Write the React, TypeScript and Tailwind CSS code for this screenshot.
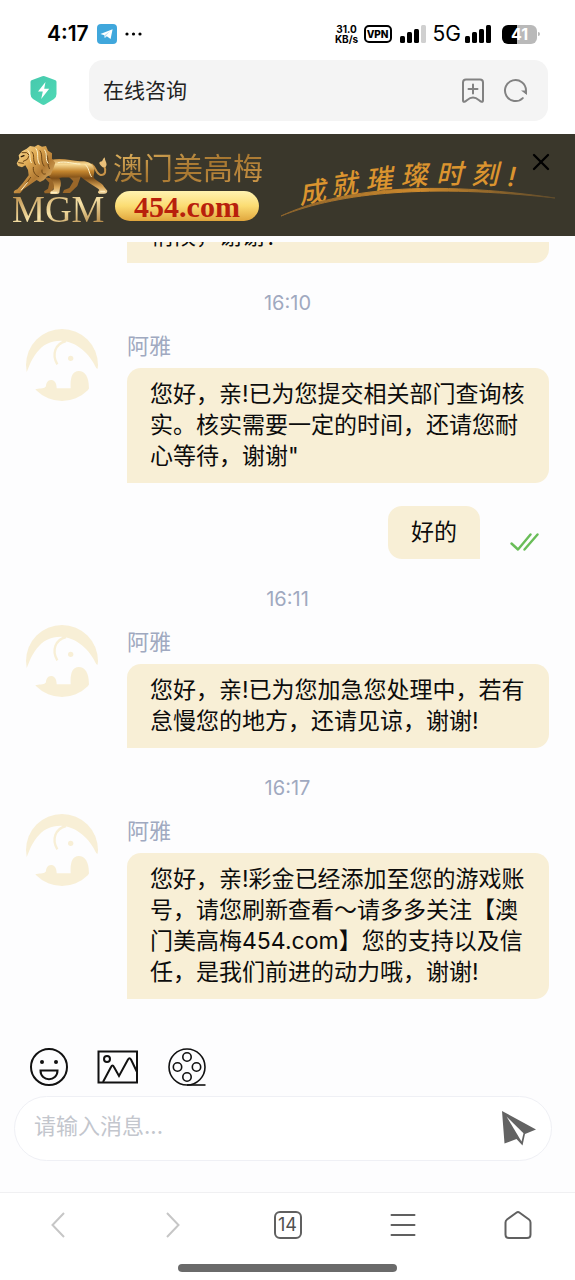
import { useState } from "react";
import { X } from "lucide-react";

interface Message {
  from: "agent" | "me";
  time?: string;
  text: string;
}

const messages: Message[] = [
  {
    from: "agent",
    time: "16:10",
    text: "您好，亲!已为您提交相关部门查询核实。核实需要一定的时间，还请您耐心等待，谢谢\"",
  },
  { from: "me", text: "好的" },
  {
    from: "agent",
    time: "16:11",
    text: "您好，亲!已为您加急您处理中，若有怠慢您的地方，还请见谅，谢谢!",
  },
  {
    from: "agent",
    time: "16:17",
    text: "您好，亲!彩金已经添加至您的游戏账号，请您刷新查看～请多多关注【澳门美高梅454.com】您的支持以及信任，是我们前进的动力哦，谢谢!",
  },
];

function SignalBars({ weak }: { weak?: boolean }) {
  return (
    <svg viewBox="0 0 27 18" className="h-[18px] w-[27px]">
      <rect x="0" y="11" width="5" height="7" rx="1.5" />
      <rect x="7" y="7" width="5" height="11" rx="1.5" />
      <rect x="14" y="4" width="5" height="14" rx="1.5" />
      <rect x="21" y="0" width="5" height="18" rx="1.5" fill={weak ? "#d0d0d0" : "#000"} />
    </svg>
  );
}

function StatusBar() {
  return (
    <div className="flex h-[60px] items-center pt-2 pr-[35px] pl-[47px] text-black">
      <span className="text-[21px] font-semibold">4:17</span>
      <svg viewBox="0 0 20 20" className="ml-2 size-5">
        <rect width="20" height="20" rx="4" fill="#40a7dc" />
        <path d="M3.4 10 15.6 5.2 13.6 15 9.8 12.3 7.8 14 7.4 11.2Z" fill="#fff" />
        <path d="M7.4 11.2 13 7.2 8.8 11.8 7.8 14Z" fill="#b5dcf2" />
      </svg>
      <svg viewBox="0 0 18 4" className="ml-2 h-1 w-[18px]">
        <circle cx="2" cy="2" r="1.6" />
        <circle cx="8.500" cy="2" r="1.6" />
        <circle cx="15" cy="2" r="1.6" />
      </svg>

      <div className="ml-auto flex items-center">
        <div className="flex w-[26px] flex-col text-center text-[10px] leading-[10px] font-bold">
          <span>31.0</span>
          <span>KB/s</span>
        </div>
        <span className="ml-1 flex h-[18px] w-7 items-center justify-center rounded-[5px] border-2 border-black text-[10px] font-extrabold">
          VPN
        </span>
        <span className="ml-2">
          <SignalBars weak />
        </span>
        <span className="ml-1.5 text-[21px]">5G</span>
        <span className="ml-1">
          <SignalBars />
        </span>
        <span className="ml-2.5 flex h-[19px] w-[35px] items-center justify-center rounded-[6px] bg-linear-to-r from-black from-42% to-[#b9b9b9] to-42% text-[16px] font-bold text-white">
          41
        </span>
        <span className="ml-px h-1 w-0.5 rounded-r bg-[#b9b9b9]" />
      </div>
    </div>
  );
}

function AddressBar() {
  return (
    <div className="flex items-center pr-[27px] pb-[13px] pl-[30px]">
      <svg viewBox="0 0 28 31" className="h-[31px] w-7">
        <defs>
          <linearGradient id="shield" x1="0" y1="0" x2="1" y2="1">
            <stop offset="0" stopColor="#46c9ad" />
            <stop offset="1" stopColor="#4fd9b5" />
          </linearGradient>
        </defs>
        <path
          d="M12.300 1.300Q13.500.7 14.700 1.300L25.500 5.300Q26.500 5.800 26.500 7V19Q26.500 22 24 24L15 29.600Q13.500 30.500 12 29.600L3 24Q.5 22 .5 19V7Q.5 5.800 1.500 5.300Z"
          fill="url(#shield)"
        />
        <path d="M15.500 7 8 16.500H12.800L11.200 24 19.200 13.800H14.200Z" fill="#fff" />
      </svg>
      <div className="ml-[31px] flex h-[61px] flex-1 items-center rounded-[14px] bg-[#f4f4f4] pr-5 pl-[14px]">
        <span className="flex-1 text-[21px] text-[#222]">在线咨询</span>
        <button aria-label="收藏">
          <svg
            viewBox="0 0 24 26"
            className="h-[26px] w-6"
            fill="none"
            stroke="#828282"
            strokeWidth="2"
            strokeLinecap="round"
            strokeLinejoin="round"
          >
            <path d="M5 1.500H19Q22 1.500 22 4.500V22.500Q22 24.500 20 23.500C18 22.500 16 19.500 12 19.500S6 22.500 4 23.500Q2 24.500 2 22.500V4.500Q2 1.500 5 1.500Z" />
            <path d="M12 6.500V15.500M7.500 11H16.500" />
          </svg>
        </button>
        <button aria-label="刷新" className="ml-[18px]">
          <svg viewBox="0 0 25 25" className="size-[25px]" fill="none" stroke="#828282" strokeWidth="2">
            <path d="M19.800 20.100A10.500 10.500 0 1 1 23 12.500V15" strokeLinecap="round" />
            <path d="M18 12.500H24V17Z" fill="#828282" stroke="none" />
          </svg>
        </button>
      </div>
    </div>
  );
}

function Lion() {
  return (
    <svg viewBox="0 0 288 150" className="h-[50px] w-24">
      <defs>
        <linearGradient id="mane" x1="0" y1="0" x2="1" y2="1">
          <stop offset="0" stopColor="#fbe3a0" />
          <stop offset=".35" stopColor="#e0ab55" />
          <stop offset=".6" stopColor="#b27a33" />
          <stop offset="1" stopColor="#f0cd85" />
        </linearGradient>
        <linearGradient id="flank" x1="0" y1="0" x2="0" y2="1">
          <stop offset="0" stopColor="#c78d3e" />
          <stop offset=".15" stopColor="#f8dc98" />
          <stop offset=".35" stopColor="#c4862f" />
          <stop offset=".55" stopColor="#7d4d17" />
          <stop offset=".8" stopColor="#d9a557" />
          <stop offset="1" stopColor="#f8e0aa" />
        </linearGradient>
      </defs>
      {/* far legs */}
      <path
        d="M166 94 184 112 172 132 156 138 152 147H174L196 126 206 98ZM96 100 112 116 108 134 96 142 98 148H114L126 132 128 104Z"
        fill="#9a6729"
      />
      {/* tail */}
      <path
        d="M238 60C252 70 252 90 266 93C280 94 284 80 276 66"
        fill="none"
        stroke="#c99448"
        strokeWidth="6"
      />
      <path d="M272 70C260 60 258 54 270 52Q274 42 279 40C276 50 290 58 280 70Z" fill="#eac07a" />
      {/* body, hind leg and planted front leg */}
      <path
        d="M116 48C146 40 180 50 204 52C226 50 242 58 246 72C250 86 242 96 246 102C254 112 272 118 276 128L286 140Q286 149 276 149H262Q254 146 262 138C258 130 232 120 206 98C184 104 160 98 142 102C148 112 148 122 144 132L142 146Q140 150 132 150H116Q110 144 124 138C132 122 118 106 108 92Z"
        fill="url(#flank)"
      />
      {/* mane, head and stretched front leg */}
      <path
        d="M14 58 22 44 20 34 30 22 44 14 54 6 68 8 78 2 90 8 102 6 108 20 120 28 120 44 130 56 124 74 116 92 104 98 96 108 84 114 74 108 62 116 48 126 34 136 24 148H6Q2 140 16 136L32 118 50 94 48 78 40 64 30 70 18 66Z"
        fill="url(#mane)"
      />
      <g fill="none" strokeLinecap="round">
        <path
          d="M30 26 44 26 52 34 46 46 34 52M20 56 34 58M60 24C70 34 60 46 70 62M84 20C94 34 84 50 96 66M104 32C112 44 104 60 112 74M64 70C62 84 70 94 80 98M90 78C88 88 94 92 100 90M56 100 42 120"
          stroke="#6b4414"
          strokeWidth="3"
        />
        <path
          d="M48 20C58 30 50 42 58 56M72 14C82 28 72 42 82 60M98 18C108 32 98 46 108 58M138 56C160 50 184 60 204 60M220 62C232 72 230 86 238 98M28 138 46 116M266 142H278M118 145H134"
          stroke="#fff3c9"
          strokeWidth="3"
        />
        <path d="m28 38 8-3" stroke="#2a1a08" strokeWidth="4" />
      </g>
    </svg>
  );
}

function Slogan() {
  return (
    <svg viewBox="0 0 280 70" className="h-[70px] w-[280px]">
      <defs>
        <linearGradient id="swoosh">
          <stop offset="0" stopColor="#8a622b" />
          <stop offset=".5" stopColor="#cf8a2c" />
          <stop offset="1" stopColor="#5d4a2b" />
        </linearGradient>
      </defs>
      <text
        x="19 51 85 120 155 190 226"
        y="54 46 40 36 34 34 36"
        rotate="-8 -8 -5 -3 -1 0 4"
        fill="#db942f"
        fontSize="27"
        fontStyle="italic"
        fontWeight="500"
      >
        成就璀璨时刻!
      </text>
      <path
        d="M0 66C60 38 150 30 274 48C150 34 60 42 0 66Z"
        fill="url(#swoosh)"
        stroke="url(#swoosh)"
        strokeWidth="1"
      />
    </svg>
  );
}

function Banner({ onClose }: { onClose: () => void }) {
  return (
    <div className="relative flex h-[102px] items-center bg-[#3a372b] pl-3">
      <div className="flex w-24 flex-col">
        <Lion />
        <span className="bg-linear-to-br from-[#b98b45] via-[#f7e3a8] to-[#a87a35] bg-clip-text font-['Liberation_Serif'] text-[37px] leading-[32px] text-transparent">
          MGM
        </span>
      </div>
      <div className="ml-[5px] flex flex-col">
        <span className="bg-linear-to-br from-[#e8bc66] via-[#a5752f] to-[#d09a4a] bg-clip-text text-[30px] leading-[38px] text-transparent">
          澳门美高梅
        </span>
        <span className="mt-1 ml-0.5 flex h-[30px] w-36 items-center justify-center rounded-full bg-linear-to-b from-[#fff3b0] via-[#fbdc72] to-[#e0a63c] font-['Liberation_Serif'] text-[30px] font-bold text-[#b8200c]">
          454.com
        </span>
      </div>
      <div className="ml-[18px]">
        <Slogan />
      </div>
      <button aria-label="关闭" onClick={onClose} className="absolute top-3.5 right-5 text-black">
        <X className="size-7" strokeWidth={2} />
      </button>
    </div>
  );
}

function Avatar() {
  return (
    <svg viewBox="0 0 216 216" className="size-[72px] shrink-0">
      <circle cx="108" cy="108" r="108" fill="#f8efd6" />
      <path
        d="M-4 134C4 132 8 112 12 105C22 82 40 56 62 45C76 38 90 35 104 35C150 36 192 74 211 118L220 120V190H188C192 150 180 126 158 126C140 126 132 144 134 178H92C92 160 84 153 75 153C66 153 60 162 60 172C55 180 44 178 32 180L-4 184Z"
        fill="#fdfdfe"
      />
      <path d="M120 36C88 44 76 76 94 106" fill="none" stroke="#f8efd6" strokeWidth="7" />
      <circle cx="134" cy="88" r="8" fill="#f8efd6" />
    </svg>
  );
}

function ChatMessage({ message }: { message: Message }) {
  if (message.from === "me") {
    return (
      <div className="mt-[23px] flex items-end justify-end pr-9">
        <p className="rounded-[14px] rounded-br-none bg-[#f8efd6] px-[23px] py-[11px] text-[23px] leading-[31px]">
          {message.text}
        </p>
        <svg
          viewBox="0 0 29 18"
          className="mb-2 ml-[30px] h-[18px] w-[29px]"
          fill="none"
          stroke="#69bd58"
          strokeWidth="2.4"
          strokeLinecap="round"
          strokeLinejoin="round"
        >
          <path d="M1.500 10.500 8 16.500 20.500 1.500M14.500 16.500 27.500 1.500" />
        </svg>
      </div>
    );
  }

  return (
    <>
      <time className="mt-[25px] block text-center text-[20px] leading-[30px] text-[#a0a9c0]">
        {message.time}
      </time>
      <div className="mt-[11px] flex gap-[29px] pr-[26px] pl-[26px]">
        <Avatar />
        <div className="flex-1 pt-0.5">
          <div className="text-[22px] leading-[30px] text-[#a0a9c0]">阿雅</div>
          <p className="mt-[7px] rounded-[14px] rounded-bl-none bg-[#f8efd6] py-[11px] pr-4 pl-[23px] text-[23px] leading-[31px]">
            {message.text}
          </p>
        </div>
      </div>
    </>
  );
}

function Composer() {
  const [draft, setDraft] = useState("");

  return (
    <div className="pt-12 pb-[31px]">
      <div className="flex items-center gap-7 pl-[29px]">
        <button aria-label="表情">
          <svg viewBox="0 0 40 40" className="size-10" fill="none" stroke="#111" strokeWidth="2">
            <circle cx="20" cy="20" r="18" />
            <circle cx="13" cy="15" r="2" fill="#111" stroke="none" />
            <circle cx="27" cy="15" r="2" fill="#111" stroke="none" />
            <path d="M11.500 23.500H28.500C28.500 35 11.500 35 11.500 23.500Z" />
          </svg>
        </button>
        <button aria-label="图片">
          <svg viewBox="0 0 42 40" className="h-10 w-[42px]" fill="none" stroke="#111" strokeWidth="2">
            <path d="M1.500 4.500H40V35.500H1.500Z" />
            <circle cx="10" cy="12" r="3" />
            <path d="M6 35 14 20Q15.500 17 17 20L22 29 31 12.500Q32.500 10 34 12.500L40 25" />
          </svg>
        </button>
        <button aria-label="视频">
          <svg viewBox="0 0 40 40" className="size-10" fill="none" stroke="#111" strokeWidth="1.6">
            <circle cx="20" cy="20" r="18" />
            <circle cx="20" cy="10" r="4.200" />
            <circle cx="10.500" cy="20" r="4.200" />
            <circle cx="29.500" cy="20" r="4.200" />
            <circle cx="20" cy="30" r="4.200" />
            <path d="M20 38H38.500" />
          </svg>
        </button>
      </div>
      <div className="mt-[9px] mr-[23px] ml-[14px] flex h-[65px] items-center rounded-full border border-[#eff0f5] bg-white pr-[14px] pl-[19px]">
        <input
          aria-label="请输入消息"
          value={draft}
          onChange={(e) => setDraft(e.target.value)}
          placeholder="请输入消息..."
          className="h-10 min-w-0 flex-1 pb-1.5 text-[22px] outline-none placeholder:text-[#c3c6cd]"
        />
        <button aria-label="发送">
          <svg viewBox="0 0 36 36" className="size-9" fill="#636363">
            <path d="M1 0 35 18.500 24 23 21.500 34.500 15.500 28 3.500 32.500Z" />
            <path d="M5.500 5.500 22.500 22.300 20.500 30.500Z" fill="#fff" />
          </svg>
        </button>
      </div>
    </div>
  );
}

function BrowserNav() {
  return (
    <footer className="border-t border-[#f0f0f2] bg-white pb-2">
      <nav className="grid h-[63px] grid-cols-5 place-items-center">
        <button aria-label="后退">
          <svg viewBox="0 0 14 26" className="h-[26px] w-3.5" fill="none" stroke="#c6c6c6" strokeWidth="2">
            <path d="M13 1 1.500 13 13 25" />
          </svg>
        </button>
        <button aria-label="前进">
          <svg viewBox="0 0 14 26" className="h-[26px] w-3.5" fill="none" stroke="#c6c6c6" strokeWidth="2">
            <path d="M1 1 12.500 13 1 25" />
          </svg>
        </button>
        <button className="flex size-7 items-center justify-center rounded-[6px] border-2 border-[#606060] text-[18px] text-[#505050]">
          14
        </button>
        <button aria-label="菜单">
          <svg viewBox="0 0 26 24" className="h-6 w-[26px]" stroke="#606060" strokeWidth="2" strokeLinecap="round">
            <path d="M1.500 2H24.500M1.500 12H24.500M1.500 22H24.500" />
          </svg>
        </button>
        <button aria-label="主页">
          <svg viewBox="0 0 28 28" className="size-7" fill="none" stroke="#606060" strokeWidth="2">
            <path d="M12.300 1.700Q14 .5 15.700 1.700L25 8.500Q26.500 9.600 26.500 11.500V23.500Q26.500 27 23 27H5Q1.500 27 1.500 23.500V11.500Q1.500 9.600 3 8.500Z" />
          </svg>
        </button>
      </nav>
      <div className="mx-auto mt-2 h-2 w-[219px] rounded-full bg-[#6a6a6a]" />
    </footer>
  );
}

export default function App() {
  const [showBanner, setShowBanner] = useState(true);

  return (
    <div className="flex min-h-screen flex-col bg-[#fdfdfe] font-['Inter','Noto_Sans_CJK_SC',sans-serif] text-[#0c0c0c]">
      <header className="bg-white">
        <StatusBar />
        <AddressBar />
      </header>
      {showBanner && <Banner onClose={() => setShowBanner(false)} />}

      <main className="flex-1">
        {/* older message, scrolled mostly out of view */}
        <div className="mt-1.5 flex h-[21px] flex-col justify-end overflow-hidden pr-[26px] pl-[127px]">
          <p className="rounded-br-[14px] bg-[#f8efd6] pb-[11px] pl-[23px] text-[23px] leading-[31px]">
            稍候，谢谢！
          </p>
        </div>
        {messages.map((message, idx) => (
          <ChatMessage key={idx} message={message} />
        ))}
      </main>

      <Composer />
      <BrowserNav />
    </div>
  );
}
